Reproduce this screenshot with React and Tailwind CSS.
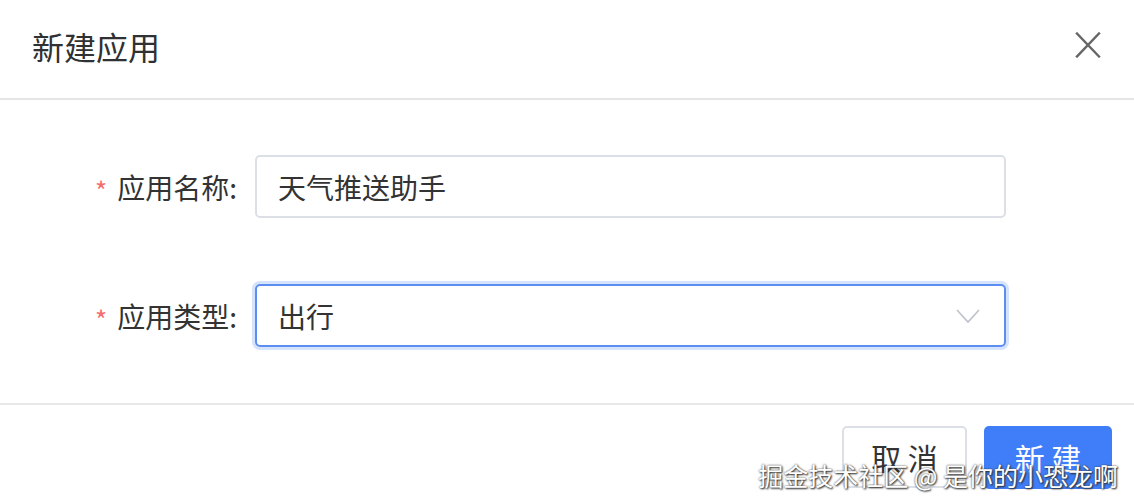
import { useState } from 'react';

const FONT = "font-['Noto_Sans_CJK_SC','Noto_Sans',sans-serif]";

/**
 * "新建应用" dialog: name input, type select, cancel / create footer.
 */
export default function App() {
  const [name, setName] = useState('天气推送助手');

  return (
    <div className={`relative w-[1134px] h-[502px] overflow-hidden bg-white text-[#303133] ${FONT}`}>
      <div className="flex items-center justify-between h-[100px] pl-[32px] pr-[33px] border-b-2 border-[#e5e5e5]">
        <h2 className="text-[32px] leading-none -mt-[6px]">新建应用</h2>
        <button type="button" aria-label="关闭" className="text-[#666] -mt-[8px]">
          <svg width="26" height="26" viewBox="0 0 26 26" fill="none" stroke="currentColor" strokeWidth="2.4" strokeLinecap="square">
            <path d="M2 1.5 24 24.5M24 1.5 2 24.5" />
          </svg>
        </button>
      </div>

      <div className="flex flex-col gap-[66px] pt-[55px] pb-[56px] border-b-2 border-[#e8e8e8]">
        <FormRow label="应用名称">
          <input
            value={name}
            onChange={(e) => setName(e.target.value)}
            className="w-full h-[63px] px-[21px] rounded-[5px] border-2 border-[#dcdfe6] text-[28px] text-[#333] outline-none"
          />
        </FormRow>
        <FormRow label="应用类型">
          <div className="flex items-center justify-between w-full h-[63px] pl-[21px] pr-[24px] rounded-[5px] border-2 border-[#5b8eef] ring-[3px] ring-[#d6e3fc] text-[28px] text-[#333]">
            <span>出行</span>
            <svg width="24" height="14" viewBox="0 0 24 14" fill="none" stroke="#c0c4cc" strokeWidth="1.8">
              <path d="M1 1 12 13 23 1" />
            </svg>
          </div>
        </FormRow>
      </div>

      <div className="flex justify-end gap-[17px] pt-[21px] pr-[22px]">
        <button type="button" className="w-[125px] h-[62px] rounded-[5px] border-2 border-[#dcdfe6] bg-white text-[30px] text-[#333]">
          取 消
        </button>
        <button type="button" className="w-[128px] h-[63px] rounded-[5px] bg-[#3f7ef8] text-[30px] text-white">
          新 建
        </button>
      </div>

      <div className="absolute right-[16px] bottom-[14px] text-[25px] leading-none text-white [text-shadow:0_0_2px_#444,1px_1px_2px_#222] pointer-events-none whitespace-pre">
        掘金技术社区 @ 是你的小恐龙啊
      </div>
    </div>
  );
}

function FormRow({ label, children }) {
  return (
    <div className="flex items-center">
      <label className="flex items-center justify-end w-[255px] pr-[18px] text-[28px] text-[#333] shrink-0">
        <span className="text-[#f56c6c] text-[26px] mr-[10px] mt-[6px]">*</span>
        {label}:
      </label>
      <div className="w-[751px]">{children}</div>
    </div>
  );
}
